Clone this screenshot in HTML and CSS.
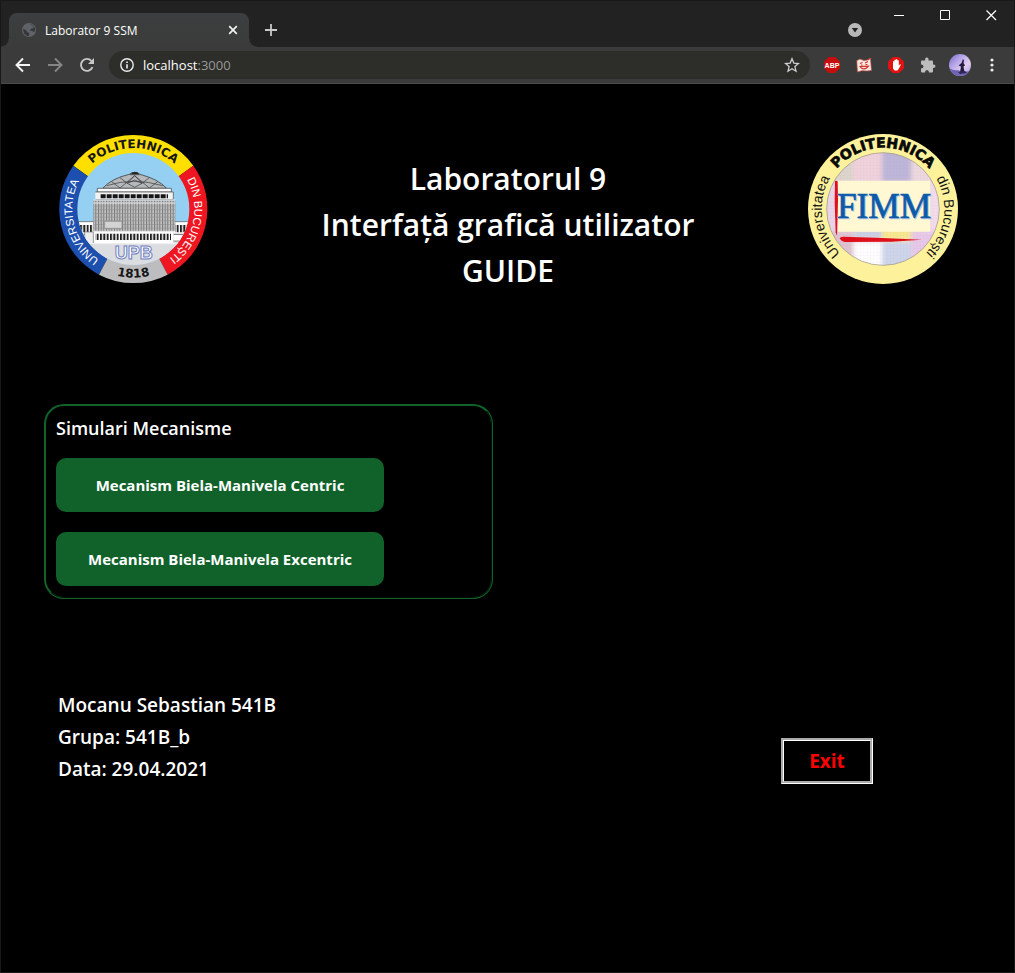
FILE: index.html
```html
<!DOCTYPE html>
<html lang="ro">
<head>
<meta charset="utf-8">
<title>Laborator 9 SSM</title>
<link rel="stylesheet" href="styles.css">
</head>
<body>
<div class="window">
  <div class="tabstrip">
    <div class="tab">
      <svg class="favicon" viewBox="0 0 16 16" width="14" height="14"><circle cx="8" cy="8" r="8" fill="#5f6368"/><path d="M1.500 6.500L5 8.500l1 2 2 .5.500 2-1.500 2.200A7.500 7.500 0 0 1 1.500 6.500zM8 2l2.500.2 3 2.600-1.500 1.500-2 .2-1 2 3 .5 1 1.500L15 8.500 14.500 5 11 1.800z" fill="#35383a"/></svg>
      <span class="tab-title">Laborator 9 SSM</span>
      <button class="icon-btn" aria-label="Close tab"><svg viewBox="0 0 10 10" width="10" height="10"><path d="M1.200 1.200l7.600 7.600M8.800 1.200L1.200 8.800" stroke="#f1f1f1" stroke-width="1.700"/></svg></button>
    </div>
    <button class="icon-btn new-tab" aria-label="New tab"><svg viewBox="0 0 14 14" width="14" height="14"><path d="M7 1v12M1 7h12" stroke="#c8c8c8" stroke-width="1.800"/></svg></button>
    <button class="icon-btn tab-search" aria-label="Search tabs"><svg viewBox="0 0 14 14" width="14" height="14"><circle cx="7" cy="7" r="7" fill="#b8b8b8"/><path d="M3.800 5h6.400L7 9.500z" fill="#222"/></svg></button>
    <div class="win-controls">
      <button class="icon-btn" aria-label="Minimize"><svg viewBox="0 0 11 11" width="11" height="11"><path d="M0 5.500h10" stroke="#fff"/></svg></button>
      <button class="icon-btn" aria-label="Maximize"><svg viewBox="0 0 11 11" width="11" height="11"><path d="M.5.5h9v9h-9z" fill="none" stroke="#fff"/></svg></button>
      <button class="icon-btn" aria-label="Close"><svg viewBox="0 0 11 11" width="11" height="11"><path d="M.5.5l9.500 9.500M10 .5l-9.500 9.500" stroke="#fff" stroke-width="1.200"/></svg></button>
    </div>
  </div>
  <div class="toolbar">
    <button class="icon-btn" aria-label="Back"><svg viewBox="0 0 16 16" width="16" height="16"><path d="M15 8H2M8 1.500L1.500 8 8 14.500" fill="none" stroke="#f4f4f4" stroke-width="1.900"/></svg></button>
    <button class="icon-btn" aria-label="Forward"><svg viewBox="0 0 16 16" width="16" height="16"><path d="M1 8h13M8 1.500L14.500 8 8 14.500" fill="none" stroke="#858585" stroke-width="1.900"/></svg></button>
    <button class="icon-btn" aria-label="Reload"><svg viewBox="0 0 16 16" width="16" height="16"><path d="M13.500 10.200A6 6 0 1 1 12.400 3.800" fill="none" stroke="#c8c8c8" stroke-width="1.900"/><path d="M15 1v6H9z" fill="#c8c8c8"/></svg></button>
    <div class="omnibox">
      <svg viewBox="0 0 14 14" width="14" height="14"><circle cx="7" cy="7" r="6.200" fill="none" stroke="#ededed" stroke-width="1.400"/><path d="M7 6.200v4.300M7 3.400v1.600" stroke="#ededed" stroke-width="1.600"/></svg>
      <span class="url">localhost<span class="port">:3000</span></span>
      <button class="icon-btn" aria-label="Bookmark"><svg viewBox="0 0 16 16" width="16" height="16"><path d="M8 1.800l1.800 4.300 4.700.4-3.600 3.100 1.100 4.600-4-2.500-4 2.500 1.100-4.600L1.500 6.500l4.700-.4z" fill="none" stroke="#cfcfcf" stroke-width="1.300"/></svg></button>
    </div>
    <div class="extensions">
      <button class="icon-btn" aria-label="Adblock Plus"><svg viewBox="0 0 16 16" width="16" height="16"><path d="M4.800 0h6.400L16 4.800v6.400L11.200 16H4.800L0 11.200V4.800z" fill="#c70d0d"/><text x="8" y="10.800" class="abp">ABP</text></svg></button>
      <button class="icon-btn" aria-label="Manga reader"><svg viewBox="0 0 16 16" width="16" height="16"><path d="M.8 3.500L4 2l4 1.500 3.500-.5L14.500 1l.2 3 .8 9.500-4.500.5-5-.3-4.500 1.300L1 9z" fill="#f6e9e4" stroke="#b8483c" stroke-width=".7"/><path d="M4 6.500l2.500-1M9 6l3-1.500M4 9.500c2 3.300 6 3 8.500-.3zM5 8h1.500M9.500 7.500h2M12 2.800l2-1.300" fill="none" stroke="#d6322a" stroke-width="1.200"/></svg></button>
      <button class="icon-btn" aria-label="AdBlock"><svg viewBox="0 0 16 16" width="16" height="16"><path d="M4.800 0h6.400L16 4.800v6.400L11.200 16H4.800L0 11.200V4.800z" fill="#e01212"/><path d="M5 8V4.400q.8-.8 1.400 0V3q.8-.8 1.500 0v-.5q.8-.8 1.500 0v1q.8-.7 1.400 0v5l1-1.100q1-.4 1.100.3L10.600 12 9.500 13.500h-3L5 11.500z" fill="#fff"/></svg></button>
      <button class="icon-btn" aria-label="Extensions"><svg viewBox="0 0 16 16" width="16" height="16"><path d="M1 4.500q0-1 1-1h3.200q-.5-3 1.600-3t1.700 3H12q1 0 1 1v3q2.500-.2 2.500 1.700T13 11v3.500q0 1-1 1H9q0-2.500-2-2.500t-2 2.500H2q-1 0-1-1v-3q2.500 0 2.500-2T1 7.500z" fill="#bdbdbd"/></svg></button>
      <button class="icon-btn" aria-label="Profile"><svg viewBox="0 0 22 22" width="22" height="22"><defs><clipPath id="avatar"><circle cx="11" cy="11" r="11"/></clipPath><linearGradient id="sky" x2="1" y2="1"><stop offset="0" stop-color="#7868c4"/><stop offset=".35" stop-color="#b5a5e8"/><stop offset=".65" stop-color="#e3cdf0"/><stop offset="1" stop-color="#a495dd"/></linearGradient></defs><g clip-path="url(#avatar)"><path d="M0 0h22v22H0z" fill="url(#sky)"/><path d="M0 14q5 3 9 2l4 2 9-1v5H0z" fill="#6f63b4"/><path d="M14 5l1 1.500-.5 2.500 1.500 2.500-1.500 1 1 5.500h-4.500l1-5.500-2.500-1 3-2.500z" fill="#251c42"/><path d="M9 18l7-1 2 2-7 1z" fill="#30275a"/></g></svg></button>
      <button class="icon-btn" aria-label="Menu"><svg viewBox="0 0 4 14" width="4" height="14"><g fill="#ececec"><circle cx="2" cy="2" r="1.600"/><circle cx="2" cy="7" r="1.600"/><circle cx="2" cy="12" r="1.600"/></g></svg></button>
    </div>
  </div>

  <main class="page">
    <header class="page-head">
      <svg class="logo" viewBox="24 27 450 450" role="img" aria-label="Universitatea Politehnica din București">
        <defs>
          <path id="arcTop" d="M67 252A183 183 0 0 1 433 252"/>
          <path id="arcLeft" d="M250 435A183 183 0 0 1 250 69"/>
          <path id="arcRight" d="M250 69A183 183 0 0 1 250 435"/>
          <path id="arcBottom" d="M44 252A206 206 0 0 0 456 252"/>
          <clipPath id="disc"><circle cx="250" cy="252" r="168"/></clipPath>
          <pattern id="facade" width="8" height="11" patternUnits="userSpaceOnUse"><path d="M0 0h8v11H0z" fill="#c2c2c2"/><path d="M0 0h3v11H0z" fill="#777"/><path d="M0 0h8v2H0z" fill="#929292"/></pattern>
          <pattern id="columns" width="10" height="40" patternUnits="userSpaceOnUse"><path d="M0 0h10v40H0z" fill="#fff"/><path d="M0 0h6v40H0z" fill="#222"/></pattern>
        </defs>
        <path d="M250 252L70 122A222 222 0 0 1 430 122z" fill="#ffdf00"/>
        <path d="M250 252L147 449A222 222 0 0 1 70 122z" fill="#1d4fae"/>
        <path d="M250 252L430 122A222 222 0 0 1 353 449z" fill="#ee1620"/>
        <path d="M250 252L353 449A222 222 0 0 1 147 449z" fill="#bdbdbf"/>
        <g clip-path="url(#disc)">
          <path d="M80 80h340v340H80z" fill="#95d0f3"/>
          <path d="M80 340h340v90H80z" fill="#dcdde0"/>
          <path d="M80 290h52v58H80zM368 290h52v58h-52z" fill="#fff" stroke="#555" stroke-width="2"/>
          <path d="M80 300h48v22H80zM374 300h48v22h-48z" fill="url(#columns)"/>
          <path d="M80 328h50M370 328h50" stroke="#666" stroke-width="3"/>
          <path d="M158 190Q185 160 238 148l8-5h16l8 5q54 14 80 42z" fill="#b5b8ba" stroke="#222" stroke-width="2"/>
          <path d="M240 149l14-8 14 8zM170 182q80-26 168 0M185 170l25 19 44-37 44 37 25-19M210 158l22 17 22-23 22 23 22-17M232 175l22 12 22-12-22-10z" fill="none" stroke="#333" stroke-width="2"/>
          <path d="M244 148l4-6h14l4 6z" fill="#222"/>
          <path d="M142 190h222v11H142z" fill="#fff" stroke="#333" stroke-width="2"/>
          <path d="M136 201h234v23H136" fill="#f2f2f2" stroke="#444" stroke-width="2"/>
          <path d="M152 214h202" stroke="#161616" stroke-width="12" stroke-dasharray="15 3"/>
          <path d="M130 226h246v94H130z" fill="url(#facade)"/>
          <path d="M130 225h246M130 234h246M130 319h246" stroke="#eee" stroke-width="3"/>
          <path d="M164 289h52v21h-52z" fill="#d3d3d3" stroke="#888" stroke-width="2"/>
          <path d="M130 320h240v34H130z" fill="#fff"/>
          <path d="M136 326h227v19H136z" fill="url(#columns)"/>
          <path d="M104 321h26v35h-26z" fill="#eee" stroke="#777" stroke-width="2"/>
          <path d="M90 356h320" stroke="#efefef" stroke-width="4"/>
        </g>
        <text class="ring-bold"><textPath href="#arcTop" startOffset="50%">POLITEHNICA</textPath></text>
        <text class="ring-thin"><textPath href="#arcLeft" startOffset="42%">UNIVERSITATEA</textPath></text>
        <text class="ring-thin"><textPath href="#arcRight" startOffset="57%">DIN BUCUREȘTI</textPath></text>
        <text class="ring-bold"><textPath href="#arcBottom" startOffset="50%">1818</textPath></text>
        <text class="upb" x="251" y="402">UPB</text>
      </svg>
      <h1 class="title">Laboratorul 9<br>Interfață grafică utilizator<br>GUIDE</h1>
      <svg class="logo" viewBox="24 27 450 450" role="img" aria-label="FIMM, Universitatea Politehnica din București">
        <defs>
          <path id="ringText" d="M249 436A184 184 0 0 1 249 68A184 184 0 0 1 249 436"/>
          <clipPath id="disc2"><circle cx="249" cy="252" r="169"/></clipPath>
          <filter id="soft"><feGaussianBlur stdDeviation="6"/></filter>
          <pattern id="grid" width="10" height="10" patternUnits="userSpaceOnUse"><path d="M0 .5h10M.5 0v10" stroke="#b98cae" stroke-opacity=".22"/></pattern>
        </defs>
        <circle cx="249" cy="252" r="225" fill="#fdf29b"/>
        <g clip-path="url(#disc2)">
          <path d="M80 83h340v340H80z" fill="#ead7e2"/>
          <g filter="url(#soft)">
            <path d="M80 80h85v90H80z" fill="#ddd5cb"/><path d="M160 80h86v90h-86z" fill="#f0d2dc"/><path d="M246 70h88v100h-88z" fill="#bdb6d8"/><path d="M334 80h90v90h-90z" fill="#edd8df"/>
            <path d="M80 170h35v160H80z" fill="#e9d5ea"/><path d="M390 170h35v150h-35z" fill="#f3dcec"/>
            <path d="M80 320h80v110H80z" fill="#dfc2cf"/><path d="M160 352h86v80h-86z" fill="#fff"/><path d="M246 310h88v38h-88z" fill="#f8e88e"/><path d="M246 350h88v80h-88z" fill="#cdd5eb"/><path d="M334 318h90v110h-90z" fill="#e8c8e8"/><path d="M165 318h80v18h-80z" fill="#c3cfe3"/>
          </g>
          <path d="M80 83h340v340H80z" fill="url(#grid)"/>
        </g>
        <circle cx="249" cy="252" r="169" fill="none" stroke="#99937a" stroke-width="2"/>
        <path d="M113 167h278v153H113z" fill="#fff8d2"/>
        <path d="M105 168q5-3 8 2l1 55-3 107-4-10-3-90z" fill="#df101c"/>
        <path d="M119 340q2-5 10-5l100 3 136 6-90 6-140 1q-12-2-16-11z" fill="#df101c"/>
        <text class="fimm-shadow" x="255" y="281">FIMM</text>
        <text class="fimm" x="252" y="279">FIMM</text>
        <text class="ring-name"><textPath href="#ringText" startOffset="22.800%">Universitatea</textPath></text>
        <text class="ring-heavy"><textPath href="#ringText" startOffset="50%">POLITEHNICA</textPath></text>
        <text class="ring-name"><textPath href="#ringText" startOffset="77.200%">din București</textPath></text>
      </svg>
    </header>

    <section class="panel">
      <h2 class="panel-title">Simulari Mecanisme</h2>
      <button class="sim-btn">Mecanism Biela-Manivela Centric</button>
      <button class="sim-btn">Mecanism Biela-Manivela Excentric</button>
    </section>

    <footer class="page-foot">
      <p class="author">Mocanu Sebastian 541B<br>Grupa: 541B_b<br>Data: 29.04.2021</p>
      <button class="exit-btn">Exit</button>
    </footer>
  </main>
</div>
</body>
</html>
```
FILE: styles.css
```css
* { box-sizing: border-box; }
body { margin: 0; background: #000; color: #fff; font-family: "Open Sans", "Noto Sans", sans-serif; }
button { font-family: inherit; cursor: pointer; }
svg { display: block; flex: none; }

.window { min-height: 100vh; border: 1px solid #181818; display: flex; flex-direction: column; }

.icon-btn { display: flex; align-items: center; justify-content: center; flex: none; padding: 0; border: 0; background: none; }

.tabstrip { display: flex; height: 46px; padding-left: 8px; background: #222; }
.tab { position: relative; display: flex; align-items: center; width: 240px; margin-top: 12px; padding: 0 11px 0 13px; border-radius: 8px 8px 0 0; background: linear-gradient(#3c3f3f, #3b3b3b); }
.tab::before, .tab::after { content: ""; position: absolute; bottom: 0; width: 8px; height: 8px; }
.tab::before { left: -8px; background: radial-gradient(circle at 0 0, #222 7px, #3b3b3b 8px); }
.tab::after { right: -8px; background: radial-gradient(circle at 100% 0, #222 7px, #3b3b3b 8px); }
.tab-title { flex: 1; margin-left: 9px; font-size: 12px; }
.new-tab { margin: 12px auto 0 15px; }
.tab-search { margin: 12px 14px 0 0; }
.win-controls { display: flex; height: 28px; }
.win-controls .icon-btn { width: 46px; }

.toolbar { display: flex; align-items: center; gap: 16px; height: 37px; padding: 0 20px 0 14px; background: #3b3b3b; border-bottom: 1px solid #4a4a4a; }
.omnibox { display: flex; flex: 1; align-items: center; height: 28px; margin-left: -2px; padding: 0 10px 0 11px; border-radius: 14px; background: #2d2d29; }
.url { flex: 1; margin-left: 9px; font-size: 13px; }
.port { color: #999; }
.extensions { display: flex; align-items: center; gap: 16px; margin-left: -2px; }
.extensions .icon-btn:nth-child(5) { margin: 0 3px 0 -3px; }
.abp { font: bold 7px "Liberation Sans", sans-serif; fill: #fff; text-anchor: middle; }

.page { flex: 1; padding: 50px 56px 0 43px; }
.page-head { display: flex; justify-content: space-between; padding-left: 14px; }
.logo { width: 150px; height: 150px; }
.title { margin: 22px 0 0; font-size: 30px; font-weight: 600; line-height: 46px; text-align: center; }

.panel { display: flex; flex-direction: column; align-items: flex-start; max-width: 449px; margin-top: 110px; padding: 8px 10px 11px; border: 2px groove #10642a; border-top-style: solid; border-left-style: solid; border-radius: 20px; }
.panel-title { margin: 0 0 16px; font-size: 18px; font-weight: 600; line-height: 28px; }
.sim-btn { width: 100%; max-width: 328px; height: 54px; padding: 0 16px; border: 0; border-radius: 10px; background: #10622a; color: #fff; font-size: 15px; font-weight: 700; }
.sim-btn + .sim-btn { margin-top: 20px; }

.page-foot { display: flex; justify-content: space-between; align-items: flex-end; margin-top: 90px; padding: 0 85px 0 14px; }
.author { margin: 0; font-size: 19px; font-weight: 600; line-height: 32px; }
.exit-btn { width: 92px; height: 46px; margin-bottom: 1px; padding: 0; border: 3px groove #fff; background: #000; color: #f00; font-size: 19px; font-weight: 700; }

.ring-bold { font: bold 36px "DejaVu Sans", sans-serif; fill: #161616; text-anchor: middle; }
.ring-thin { font: 34px "Liberation Sans", sans-serif; fill: #fff; text-anchor: middle; }
.ring-name { font: 42px "Liberation Sans", sans-serif; fill: #111; text-anchor: middle; }
.ring-heavy { font: bold 42px "DejaVu Sans", sans-serif; fill: #080808; stroke: #080808; stroke-width: 2px; text-anchor: middle; }
.upb { font: bold 54px "Liberation Sans", sans-serif; fill: #fff; stroke: #6d7cc2; stroke-width: 3px; text-anchor: middle; }
.fimm { font: 106px "Liberation Serif", serif; fill: #0b5ba9; stroke: #0b5ba9; stroke-width: 2px; text-anchor: middle; }
.fimm-shadow { font: 106px "Liberation Serif", serif; fill: #b7c6e4; stroke: #b7c6e4; stroke-width: 2px; text-anchor: middle; }
```
